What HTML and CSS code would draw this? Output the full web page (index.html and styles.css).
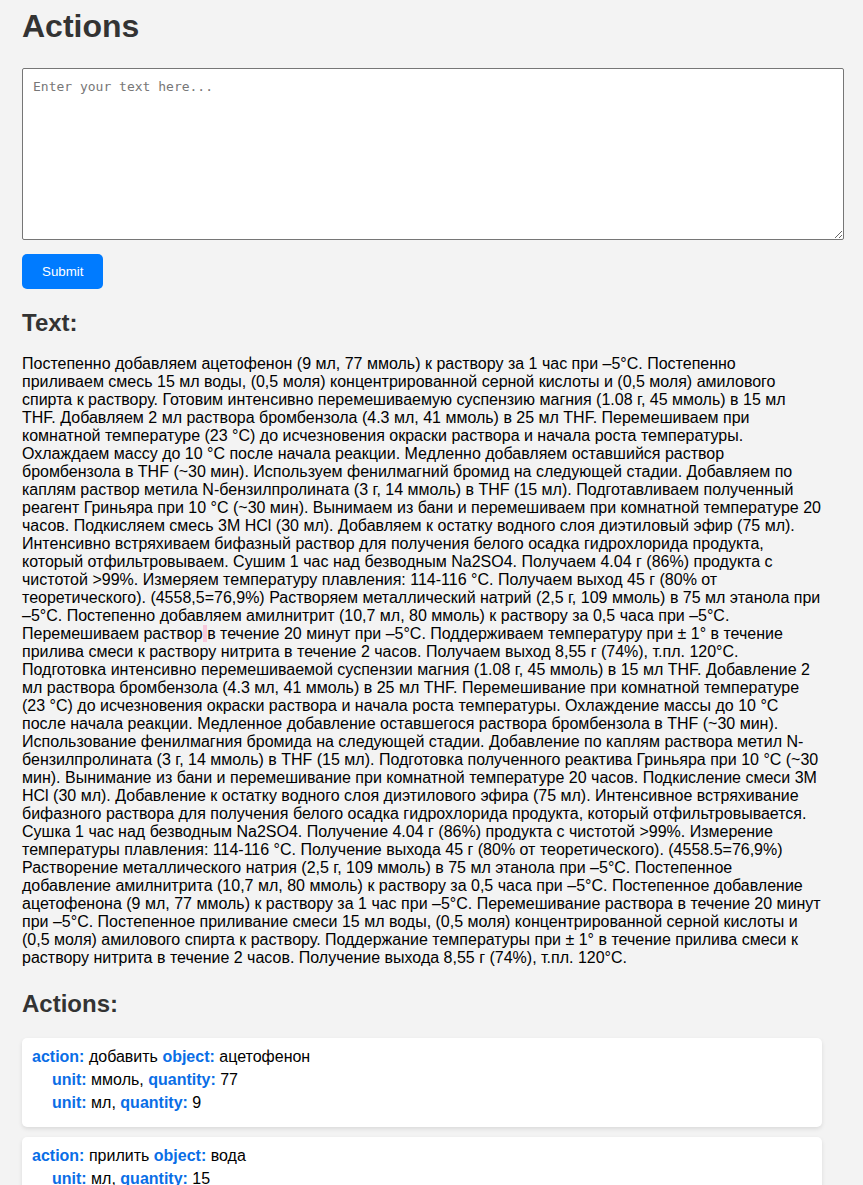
FILE: index.html
```html
<!DOCTYPE html>
<html lang="ru">
<head>
<meta charset="utf-8">
<title>Actions</title>
<link rel="stylesheet" href="styles.css">
</head>
<body>
<div class="page">
  <h1 class="title">Actions</h1>
  <form class="form">
    <textarea class="input" placeholder="Enter your text here..."></textarea>
    <button type="button" class="submit">Submit</button>
  </form>

  <h2 class="section-title text-title">Text:</h2>
  <p class="text">Постепенно добавляем ацетофенон (9 мл, 77 ммоль) к раствору за 1 час при –5°C. Постепенно приливаем смесь 15 мл воды, (0,5 моля) концентрированной серной кислоты и (0,5 моля) амилового спирта к раствору. Готовим интенсивно перемешиваемую суспензию магния (1.08 г, 45 ммоль) в 15 мл THF. Добавляем 2 мл раствора бромбензола (4.3 мл, 41 ммоль) в 25 мл THF. Перемешиваем при комнатной температуре (23 °C) до исчезновения окраски раствора и начала роста температуры. Охлаждаем массу до 10 °C после начала реакции. Медленно добавляем оставшийся раствор бромбензола в THF (~30 мин). Используем фенилмагний бромид на следующей стадии. Добавляем по каплям раствор метила N-бензилпролината (3 г, 14 ммоль) в THF (15 мл). Подготавливаем полученный реагент Гриньяра при 10 °C (~30 мин). Вынимаем из бани и перемешиваем при комнатной температуре 20 часов. Подкисляем смесь 3M HCl (30 мл). Добавляем к остатку водного слоя диэтиловый эфир (75 мл). Интенсивно встряхиваем бифазный раствор для получения белого осадка гидрохлорида продукта, который отфильтровываем. Сушим 1 час над безводным Na2SO4. Получаем 4.04 г (86%) продукта с чистотой &gt;99%. Измеряем температуру плавления: 114-116 °C. Получаем выход 45 г (80% от теоретического). (4558,5=76,9%) Растворяем металлический натрий (2,5 г, 109 ммоль) в 75 мл этанола при –5°C. Постепенно добавляем амилнитрит (10,7 мл, 80 ммоль) к раствору за 0,5 часа при –5°C. Перемешиваем раствор<span class="hl"> </span>в течение 20 минут при –5°C. Поддерживаем температуру при ± 1° в течение прилива смеси к раствору нитрита в течение 2 часов. Получаем выход 8,55 г (74%), т.пл. 120°C. Подготовка интенсивно перемешиваемой суспензии магния (1.08 г, 45 ммоль) в 15 мл THF. Добавление 2 мл раствора бромбензола (4.3 мл, 41 ммоль) в 25 мл THF. Перемешивание при комнатной температуре (23 °C) до исчезновения окраски раствора и начала роста температуры. Охлаждение массы до 10 °C после начала реакции. Медленное добавление оставшегося раствора бромбензола в THF (~30 мин). Использование фенилмагния бромида на следующей стадии. Добавление по каплям раствора метил N-бензилпролината (3 г, 14 ммоль) в THF (15 мл). Подготовка полученного реактива Гриньяра при 10 °C (~30 мин). Вынимание из бани и перемешивание при комнатной температуре 20 часов. Подкисление смеси 3M HCl (30 мл). Добавление к остатку водного слоя диэтилового эфира (75 мл). Интенсивное встряхивание бифазного раствора для получения белого осадка гидрохлорида продукта, который отфильтровывается. Сушка 1 час над безводным Na2SO4. Получение 4.04 г (86%) продукта с чистотой &gt;99%. Измерение температуры плавления: 114-116 °C. Получение выхода 45 г (80% от теоретического). (4558.5=76,9%) Растворение металлического натрия (2,5 г, 109 ммоль) в 75 мл этанола при –5°C. Постепенное добавление амилнитрита (10,7 мл, 80 ммоль) к раствору за 0,5 часа при –5°C. Постепенное добавление ацетофенона (9 мл, 77 ммоль) к раствору за 1 час при –5°C. Перемешивание раствора в течение 20 минут при –5°C. Постепенное приливание смеси 15 мл воды, (0,5 моля) концентрированной серной кислоты и (0,5 моля) амилового спирта к раствору. Поддержание температуры при ± 1° в течение прилива смеси к раствору нитрита в течение 2 часов. Получение выхода 8,55 г (74%), т.пл. 120°C.</p>

  <h2 class="section-title actions-title">Actions:</h2>
  <div class="actions">
    <div class="card">
      <div class="line"><span class="label">action:</span> добавить <span class="label">object:</span> ацетофенон</div>
      <div class="line sub"><span class="label">unit:</span> ммоль, <span class="label">quantity:</span> 77</div>
      <div class="line sub"><span class="label">unit:</span> мл, <span class="label">quantity:</span> 9</div>
    </div>
    <div class="card">
      <div class="line"><span class="label">action:</span> прилить <span class="label">object:</span> вода</div>
      <div class="line sub"><span class="label">unit:</span> мл, <span class="label">quantity:</span> 15</div>
    </div>
    <div class="card">
      <div class="line"><span class="label">action:</span> прилить <span class="label">object:</span> серная кислота</div>
      <div class="line sub"><span class="label">unit:</span> моль, <span class="label">quantity:</span> 0,5</div>
    </div>
    <div class="card">
      <div class="line"><span class="label">action:</span> прилить <span class="label">object:</span> амиловый спирт</div>
      <div class="line sub"><span class="label">unit:</span> моль, <span class="label">quantity:</span> 0,5</div>
    </div>
  </div>
</div>
</body>
</html>
```

FILE: styles.css
```css
html, body {
  margin: 0;
  padding: 0;
}

body {
  background: #f3f3f3;
  font-family: "Liberation Sans", Arial, Helvetica, sans-serif;
  font-size: 16px;
  line-height: 18px;
  color: #000;
}

.page {
  max-width: 800px;
  padding: 8px 22px 20px;
}

.title {
  margin: 0 0 23px;
  font-size: 32px;
  line-height: normal;
  font-weight: bold;
  color: #333;
}

.form {
  margin: 0;
}

.input {
  display: block;
  width: 100%;
  height: 150px;
  padding: 10px;
  margin: 0 0 14px;
  border: 1px solid #767676;
  border-radius: 2px;
  background: #fff;
  font-family: "DejaVu Sans Mono", "Liberation Mono", monospace;
  font-size: 13px;
  color: #000;
  resize: both;
}

.input::placeholder {
  color: #777;
}

.submit {
  display: block;
  padding: 10px 20px;
  border: none;
  border-radius: 5px;
  background: #007bff;
  color: #fff;
  font-family: "Liberation Sans", Arial, sans-serif;
  font-size: 13.333px;
  line-height: normal;
  cursor: pointer;
}

.section-title {
  font-size: 24px;
  line-height: normal;
  font-weight: bold;
  color: #333;
}

.text-title {
  margin: 20px 0 18px;
}

.text {
  margin: 0 0 23px;
}

.hl {
  background: #f8c9dc;
}

.actions-title {
  margin: 0 0 20px;
}

.card {
  background: #fff;
  border-radius: 5px;
  box-shadow: 0 2px 4px rgba(0, 0, 0, 0.1);
  padding: 10px 10px 10px;
  margin-bottom: 10px;
}

.line {
  margin-bottom: 5px;
}

.sub {
  margin-left: 20px;
}

.label {
  color: #0a6ee6;
  font-weight: bold;
}
```
